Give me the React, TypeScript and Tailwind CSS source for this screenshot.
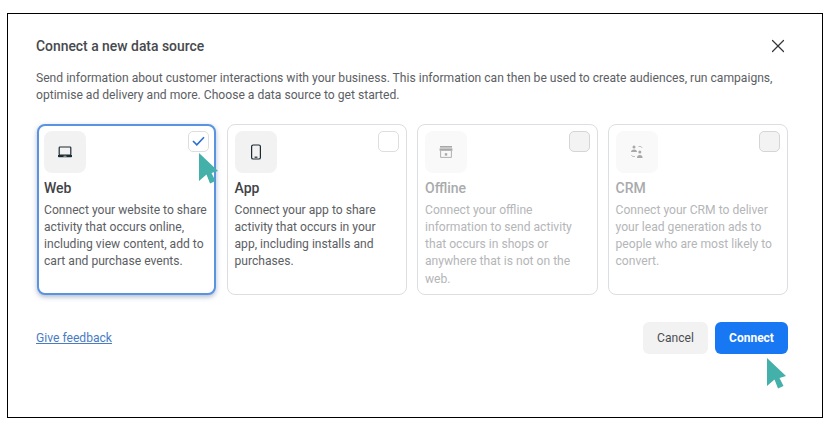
import { X } from 'lucide-react'
import type { ReactNode } from 'react'

function Laptop() {
  return (
    <svg width="16" height="16" viewBox="0 0 16 16" fill="none">
      <rect x="2.200" y="3" width="11.600" height="8" rx="0.800" stroke="#1c2b33" strokeWidth="1.200" />
      <path d="M1 11h14v1.400a.8.8 0 0 1-.8.8H1.800a.8.8 0 0 1-.8-.8z" fill="#1c2b33" />
      <rect x="6.500" y="11.800" width="3" height="0.700" fill="#f2f2f2" />
    </svg>
  )
}

function Phone() {
  return (
    <svg width="16" height="16" viewBox="0 0 16 16" fill="none">
      <rect x="3.600" y="1" width="8.800" height="14" rx="1.600" stroke="#1c2b33" strokeWidth="1.200" />
      <path d="M6.600 13.200h2.800" stroke="#1c2b33" strokeWidth="1.200" />
    </svg>
  )
}

function Store() {
  return (
    <svg width="16" height="16" viewBox="0 0 16 16" fill="none">
      <rect x="2" y="2" width="12" height="1.600" fill="#a8a8a8" />
      <path d="M1.600 4.400h12.800v2.400H1.600z" fill="#a8a8a8" />
      <path d="M2.600 7v6.400h10.800V7" stroke="#b0b0b0" strokeWidth="1" />
      <rect x="6.800" y="9.200" width="2.400" height="2.400" fill="#a8a8a8" />
    </svg>
  )
}

function People() {
  return (
    <svg width="16" height="16" viewBox="0 0 16 16" fill="none">
      <circle cx="5" cy="3" r="1.500" fill="#a8a8a8" />
      <path d="M2 8c0-1.600 1.200-2.500 3-2.500S8 6.400 8 8z" fill="#a8a8a8" />
      <circle cx="10.800" cy="8" r="1.500" fill="#a8a8a8" />
      <path d="M8 14c0-2 1-3 2.800-3s2.800 1 2.800 3z" fill="#a8a8a8" />
      <path d="M9.500 2.500h2.500l1.200 1.500M2.500 11l1 1.500h2.500" stroke="#b8b8b8" strokeWidth="0.900" />
    </svg>
  )
}

function Cursor({ className }: { className: string }) {
  return (
    <svg className={className} width="20" height="31" viewBox="0 0 20 31">
      <path d="M0 0 19 18 12.500 20 16.500 28 11 30.500 7.500 21.500 0 28z" fill="#43b0aa" />
    </svg>
  )
}

type CardProps = {
  icon: ReactNode
  title: string
  text: string
  selected?: boolean
  disabled?: boolean
}

function SourceCard({ icon, title, text, selected, disabled }: CardProps) {
  return (
    <div
      className={
        selected
          ? 'relative mx-[1px] h-[171px] rounded-lg border-2 border-[#5a93e0] bg-white px-[5px] pt-[5px] shadow-[0_2px_5px_rgba(30,60,110,0.35)]'
          : 'relative h-[171px] rounded-lg border border-[#dcdee1] bg-white px-[7px] pt-[6px]'
      }
    >
      <div className={disabled ? 'flex h-[42px] w-[42px] items-center justify-center rounded-lg bg-[#f9f9f9]' : 'flex h-[42px] w-[42px] items-center justify-center rounded-lg bg-[#f2f2f2]'}>
        {icon}
      </div>
      <h3 className={disabled ? 'mt-[5px] text-[14px] leading-[20px] font-medium text-[#a9abad]' : 'mt-[5px] text-[14px] leading-[20px] font-medium text-[#3f4347]'}>
        {title}
      </h3>
      <p className={disabled ? 'mt-[4px] text-[12.12px] leading-[17.3px] text-[#b4b6b8]' : 'mt-[4px] text-[12.12px] leading-[17.3px] text-[#5c6064]'}>
        {text}
      </p>
      <div
        className={
          disabled
            ? 'absolute top-[6px] right-[7px] h-[21px] w-[21px] rounded-[5px] border border-[#d4d5d6] bg-[#f3f3f3]'
            : selected
              ? 'absolute top-[5px] right-[5px] flex h-[21px] w-[21px] items-center justify-center rounded-[5px] border border-[#dcdee1] bg-white'
              : 'absolute top-[6px] right-[7px] h-[21px] w-[21px] rounded-[5px] border border-[#dcdee1] bg-white'
        }
      >
        {selected && (
          <svg width="13" height="10" viewBox="0 0 13 10" fill="none">
            <path d="M1 5l3.800 3.800L12 1.200" stroke="#2b6fd0" strokeWidth="1.600" />
          </svg>
        )}
      </div>
    </div>
  )
}

export default function App() {
  return (
    <div className="relative h-[432px] w-[831px] bg-white pt-[13px] pl-[7px] font-['Roboto',sans-serif]">
      <div className="h-[405px] w-[816px] border border-black bg-white pt-[23px] pr-[34px] pl-[28px]">
        <div className="flex items-center justify-between">
          <h2 className="text-[13.9px] leading-[18px] font-medium text-[#46494d]">Connect a new data source</h2>
          <X className="-mr-[1px] h-[22px] w-[22px] -my-[2px] text-[#33373b]" strokeWidth={1.3} />
        </div>
        <p className="mt-[15px] text-[12.12px] leading-[17.3px] text-[#5c6064]">
          Send information about customer interactions with your business. This information can then be used to create audiences, run campaigns, optimise ad delivery and more. Choose a data source to get started.
        </p>
        <div className="mt-[19px] grid grid-cols-4 gap-[10px]">
          <SourceCard
            selected
            icon={<Laptop />}
            title="Web"
            text="Connect your website to share activity that occurs online, including view content, add to cart and purchase events."
          />
          <SourceCard
            icon={<Phone />}
            title="App"
            text="Connect your app to share activity that occurs in your app, including installs and purchases."
          />
          <SourceCard
            disabled
            icon={<Store />}
            title="Offline"
            text="Connect your offline information to send activity that occurs in shops or anywhere that is not on the web."
          />
          <SourceCard
            disabled
            icon={<People />}
            title="CRM"
            text="Connect your CRM to deliver your lead generation ads to people who are most likely to convert."
          />
        </div>
        <div className="mt-[27px] flex items-center justify-between">
          <a className="pt-[1px] text-[12.12px] text-[#4a7cc4] underline">Give feedback</a>
          <div className="flex gap-[7px]">
            <button className="h-[32px] w-[65px] rounded-md bg-[#f2f2f2] text-[12.12px] text-[#4a4e52]">Cancel</button>
            <button className="h-[32px] w-[73px] rounded-md bg-[#1877f2] text-[12px] font-bold text-white">Connect</button>
          </div>
        </div>
      </div>
      <Cursor className="absolute top-[153px] left-[199px]" />
      <Cursor className="absolute top-[358px] left-[767px]" />
    </div>
  )
}
